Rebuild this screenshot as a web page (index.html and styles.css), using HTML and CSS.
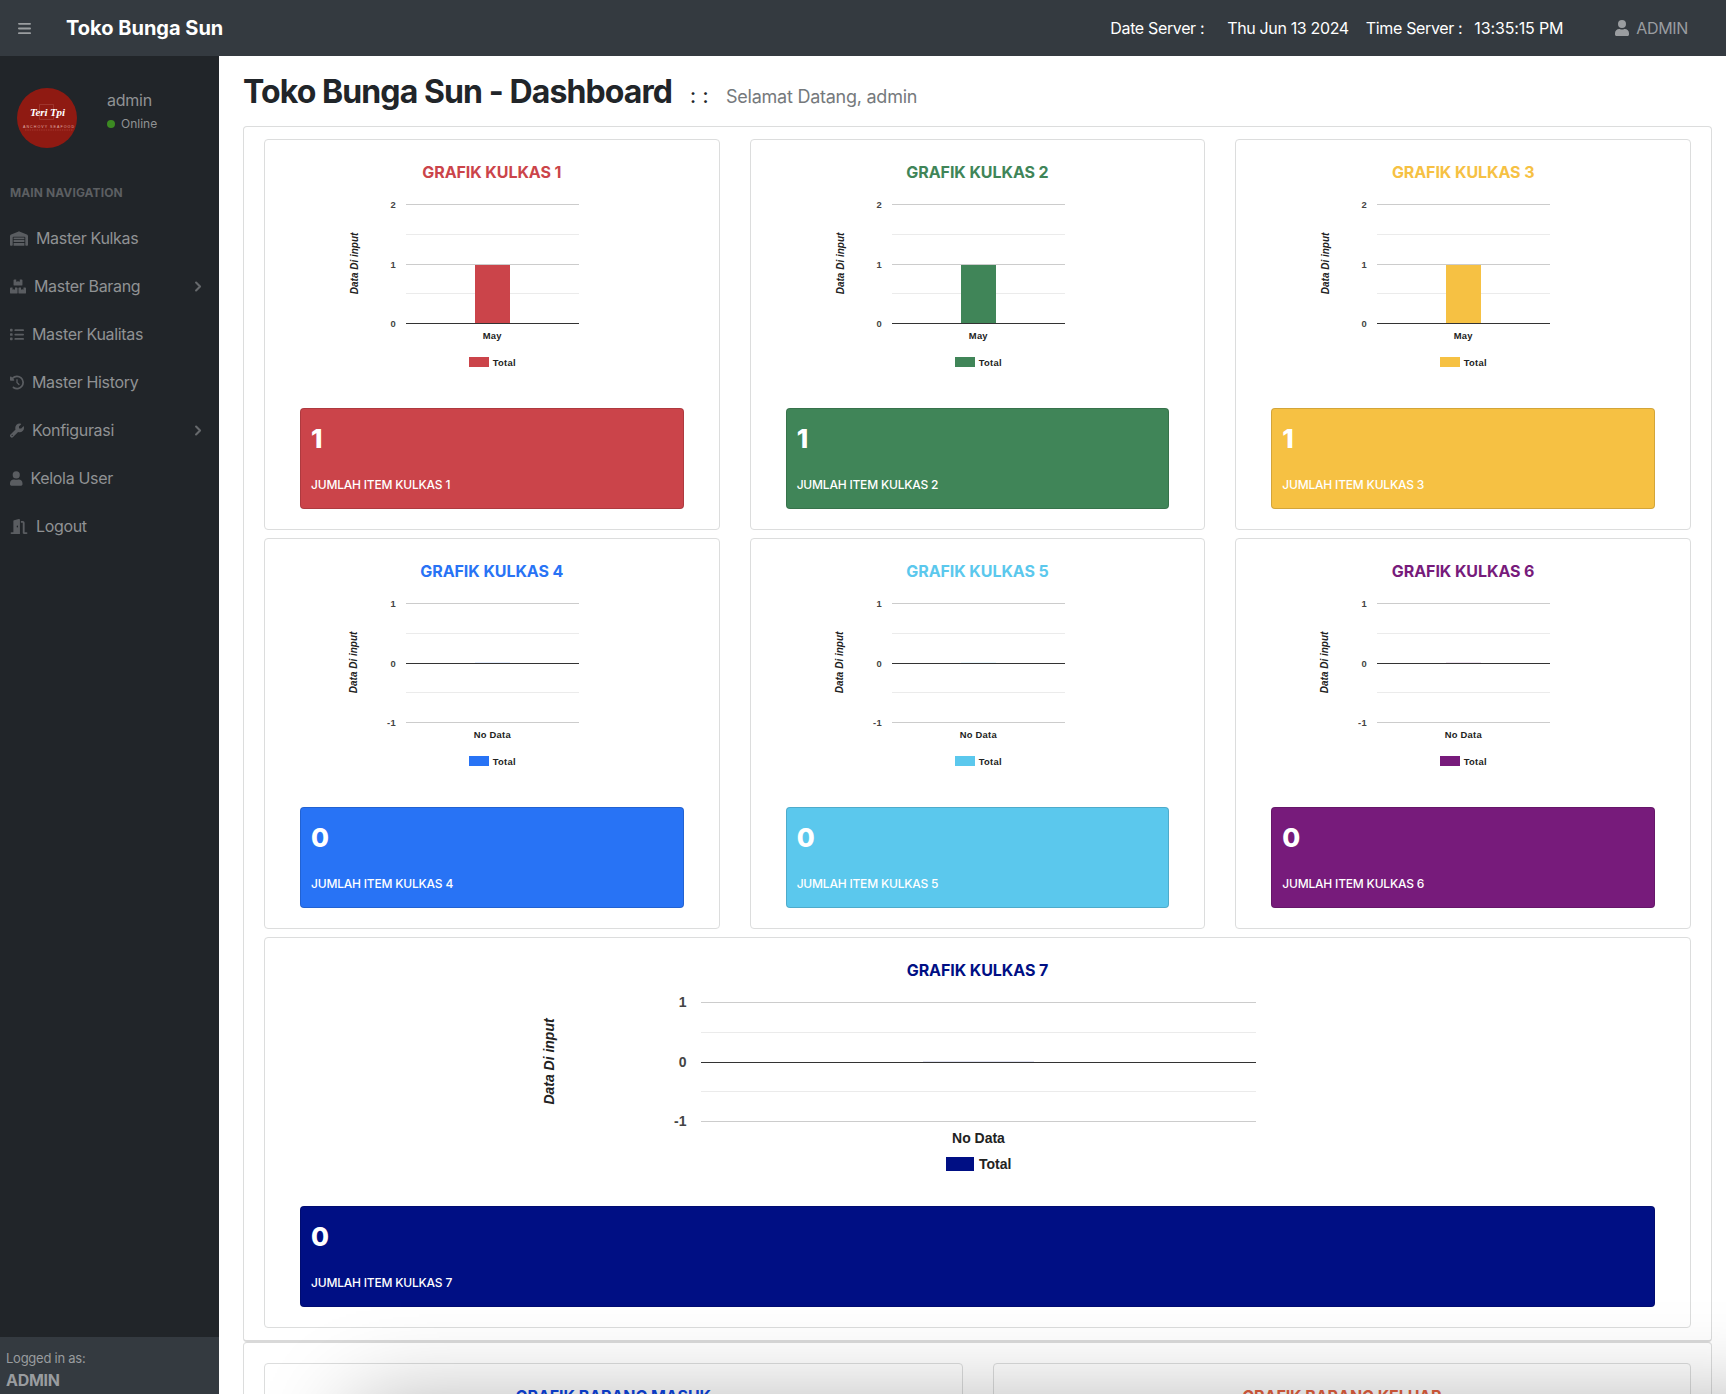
FILE: index.html
```html
<!DOCTYPE html>
<html lang="id">
<head>
<meta charset="utf-8">
<title>Toko Bunga Sun - Dashboard</title>
<link rel="stylesheet" href="styles.css">
</head>
<body>
<header class="topbar">
  <svg class="burger" viewBox="0 0 448 512"><path d="M0 96c0-17.700 14.300-32 32-32h384a32 32 0 0 1 0 64H32C14.300 128 0 113.700 0 96zm0 160c0-17.700 14.300-32 32-32h384a32 32 0 0 1 0 64H32c-17.700 0-32-14.300-32-32zm448 160c0 17.700-14.300 32-32 32H32a32 32 0 0 1 0-64h384c17.700 0 32 14.300 32 32z"/></svg>
  <span class="brand">Toko Bunga Sun</span>
  <div class="clock"><span class="c1">Date Server :</span><span class="c2">Thu Jun 13 2024</span><span class="c3">Time Server :</span><span class="c4">13:35:15 PM</span></div>
  <div class="account"><svg viewBox="0 0 448 512"><path d="M224 256a128 128 0 1 0 0-256 128 128 0 1 0 0 256zM134 288C60 288 0 348 0 422v42c0 26 22 48 48 48h352c26 0 48-22 48-48v-42c0-74-60-134-134-134H297a174 174 0 0 1-146 0z"/></svg><span>ADMIN</span></div>
</header>
<div class="shell">
  <aside class="sidebar">
    <div class="profile">
      <svg class="avatar" viewBox="0 0 60 60"><circle cx="30" cy="30" r="30" fill="#8f1a12"/><path d="M22.500 16.500h14v15h-14z" fill="none" stroke="#a8483f" stroke-width=".6"/><text class="script" x="13" y="28" textLength="35">Teri Tpi</text><text class="tag" x="6" y="39.500" textLength="51">ANCHOVY SEAFOOD</text><path d="M8 42h48" stroke="#b0453c" stroke-width=".7" stroke-dasharray="1.500 .8"/></svg>
      <div class="who"><div class="name">admin</div><div class="status"><i></i>Online</div></div>
    </div>
    <div class="nav-title">MAIN NAVIGATION</div>
    <nav>
      <a><svg style="width:18px" viewBox="0 0 640 512"><path fill-rule="evenodd" d="M0 488V171c0-26 16-50 40-60L308 4c8-3 16-3 24 0l268 107c24 10 40 34 40 60v317c0 13-11 24-24 24h-48c-13 0-24-11-24-24V224c0-18-14-32-32-32H128c-18 0-32 14-32 32v264c0 13-11 24-24 24H24c-13 0-24-11-24-24zM128 224h384v48H128zm0 80h384v80H128zm0 112h384v96H128z"/></svg><span>Master Kulkas</span></a>
      <a><svg style="width:16px" viewBox="0 0 576 512"><path d="M160 0h64v88l64-20 64 20V0h64q32 0 32 32v160q0 32-32 32H160q-32 0-32-32V32q0-32 32-32zM32 288h60v88l44-20 44 20v-88h60q32 0 32 32v160q0 32-32 32H32q-32 0-32-32V320q0-32 32-32zM336 288h60v88l44-20 44 20v-88h60q32 0 32 32v160q0 32-32 32H336q-32 0-32-32V320q0-32 32-32z"/></svg><span>Master Barang</span><svg class="chev" viewBox="0 0 320 512"><path d="M70 70l186 186L70 442"/></svg></a>
      <a><svg style="width:14px" viewBox="0 0 512 512"><path d="M24 48h48q24 0 24 24v48q0 24-24 24H24q-24 0-24-24V72q0-24 24-24zM192 64h288a32 32 0 0 1 0 64H192a32 32 0 0 1 0-64zM192 224h288a32 32 0 0 1 0 64H192a32 32 0 0 1 0-64zM192 384h288a32 32 0 0 1 0 64H192a32 32 0 0 1 0-64zM24 208h48q24 0 24 24v48q0 24-24 24H24q-24 0-24-24v-48q0-24 24-24zM24 368h48q24 0 24 24v48q0 24-24 24H24q-24 0-24-24v-48q0-24 24-24z"/></svg><span>Master Kualitas</span></a>
      <a><svg style="width:14px" viewBox="0 0 512 512"><path d="M75 75 41 41C26 26 0 37 0 58v110c0 13 11 24 24 24h110c21 0 32-26 17-41l-31-31a192 192 0 1 1 26 293c-35-25-75 26-37 53A256 256 0 1 0 75 75zM256 128c-13 0-24 11-24 24v104c0 6 3 12 7 17l72 72c24 22 56-10 34-34l-65-65v-94c0-13-11-24-24-24z"/></svg><span>Master History</span></a>
      <a><svg style="width:14px" viewBox="0 0 512 512"><path fill-rule="evenodd" d="M352 320c88 0 160-72 160-160 0-15-2-30-6-44-3-12-18-15-26-6l-69 69c-3 3-7 5-11 5h-56c-9 0-16-7-16-16v-56c0-4 2-8 5-11l69-69c9-9 6-23-6-26-14-4-29-6-44-6-88 0-160 72-160 160 0 19 3 38 10 55L19 398a65 65 0 0 0 95 95l183-183c17 7 36 10 55 10zM80 408a24 24 0 1 1 0 48 24 24 0 0 1 0-48z"/></svg><span>Konfigurasi</span><svg class="chev" viewBox="0 0 320 512"><path d="M70 70l186 186L70 442"/></svg></a>
      <a><svg style="width:12.500px" viewBox="0 0 448 512"><path d="M224 256a128 128 0 1 0 0-256 128 128 0 1 0 0 256zM134 288C60 288 0 348 0 422v42c0 26 22 48 48 48h352c26 0 48-22 48-48v-42c0-74-60-134-134-134H297a174 174 0 0 1-146 0z"/></svg><span>Kelola User</span></a>
      <a><svg style="width:18px" viewBox="0 0 576 512"><path fill-rule="evenodd" d="M320 32c0-20-18-36-40-31L120 41C106 45 96 58 96 72v376H32a32 32 0 0 0 0 64h288zM256 256c0 18-10 32-24 32s-24-14-24-32 10-32 24-32 24 14 24 32zM352 64v64h64v352c0 18 14 32 32 32h96a32 32 0 0 0 0-64h-64V128c0-35-29-64-64-64z"/></svg><span>Logout</span></a>
    </nav>
    <div class="logged"><small>Logged in as:</small><b>ADMIN</b></div>
  </aside>
  <main>
    <h1><span class="t1">Toko Bunga Sun - Dashboard</span><span class="t2">: :</span><span class="t3">Selamat Datang, admin</span></h1>
    <section class="panel grid" id="grid"></section>
    <section class="panel bottom">
      <div class="card"><h2 class="masuk">GRAFIK BARANG MASUK</h2></div>
      <div class="card"><h2 class="keluar">GRAFIK BARANG KELUAR</h2></div>
      <div class="shade"></div>
    </section>
  </main>
</div>
<script src="charts.js"></script>
</body>
</html>
```
FILE: styles.css
```css
*{box-sizing:border-box}
html{height:1394px;overflow:hidden}
body{margin:0;height:1394px;overflow:hidden;font-family:Inter,"Liberation Sans",sans-serif;font-size:16px;line-height:24px;color:#212529;background:#fff}
.topbar{height:56px;background:#343a40;display:flex;align-items:center;color:#fff;letter-spacing:-.35px}
.burger{width:13px;height:15px;margin-left:18px;fill:#9a9da0}
.brand{margin-left:35px;font-size:20px;font-weight:700;letter-spacing:0;white-space:nowrap}
.clock{margin-left:auto;display:flex;white-space:nowrap}
.c2{margin-left:23px}.c3{margin-left:17px}.c4{margin-left:12px;letter-spacing:-.15px}
.account{margin:0 38px 0 52px;display:flex;align-items:center;gap:7px;color:#9a9da0}
.account svg{width:14px;height:16px;fill:#9a9da0}
.shell{display:flex;height:1338px;overflow:hidden}
.sidebar{width:219px;flex:none;background:#212529;display:flex;flex-direction:column;color:#909294}
.profile{display:flex;padding:32px 0 0 17px;height:120px}
.avatar{width:60px;height:60px}
.script{font:italic 700 11px "Liberation Serif",serif;fill:#fff}
.tag{font:3.600px "Liberation Sans",sans-serif;fill:#e0b0aa}
.who{margin-left:30px;letter-spacing:-.25px}
.status{font-size:12px;line-height:24px;display:flex;align-items:center;gap:6px;letter-spacing:0}
.status i{width:8px;height:8px;border-radius:50%;background:#3c8a22}
.nav-title{font-size:12px;font-weight:700;line-height:18px;padding:8px 0 0 10px;height:38px;color:#5c5f62;letter-spacing:.1px}
nav{display:flex;flex-direction:column}
nav a{height:48px;display:flex;align-items:center;padding:0 17px 0 10px;letter-spacing:-.33px}
nav a svg{height:15px;fill:#5a5d61;flex:none}
nav a span{margin-left:8px;white-space:nowrap}
nav .chev{width:8px;height:11px;margin-left:auto;fill:none;stroke:#66696c;stroke-width:95;stroke-linecap:round;stroke-linejoin:round}
.logged{margin-top:auto;height:57px;background:#343a40;padding:9px 6px;color:#999c9f;line-height:24px}
.logged small{display:block;font-size:13px;letter-spacing:-.25px}
.logged b{display:block;font-size:16px;font-weight:700;line-height:20px;letter-spacing:-.3px}
main{flex:1;min-width:0;padding:0 14px 0 24px}
h1{margin:0;height:70px;padding-top:16px;display:flex;align-items:baseline;line-height:40px;white-space:nowrap}
.t1{font-size:32px;font-weight:700;letter-spacing:-.9px}
.t2{font-size:20px;font-weight:500;margin-left:18px;letter-spacing:.5px}
.t3{font-size:18px;font-weight:400;color:#75797c;margin-left:17px;letter-spacing:-.25px}
.panel{border:1px solid #dcdddd;border-radius:4px;padding:12px 20px}
.grid{display:grid;grid-template-columns:repeat(3,1fr);grid-auto-rows:391px;column-gap:30px;row-gap:8px;height:1216px;border-bottom:2px solid #d9d9d9}
.card{border:1px solid #dcdddd;border-radius:4px;height:391px;padding:20px 35px 0}
.wide{grid-column:1/4}
h2{margin:0;font-size:16px;font-weight:700;line-height:24px;text-align:center;white-space:nowrap;letter-spacing:-.08px}
.chart{display:block;width:100%;height:224px}
.chart text{font-family:"Liberation Sans",Arial,sans-serif;font-weight:700;fill:#222}
.chart .tick{fill:#444;text-anchor:end}
.chart .mid{text-anchor:middle}
.chart .ital{font-style:italic;text-anchor:middle}
.small-chart text{font-size:9.400px;letter-spacing:.25px}
.small-chart .ital{font-size:10px;letter-spacing:0}
.big-chart text{font-size:14px}
.tile{height:101px;border:1px solid rgba(0,0,0,.14);border-radius:4px;color:#fff;padding:10px}
.tile b{display:block;font-size:26px;line-height:40px;font-weight:800;letter-spacing:-.3px}
.tile span{display:block;margin-top:14px;font-size:12px;font-weight:500;line-height:24px;letter-spacing:-.2px}
.bottom{position:relative;border-top-color:#d9d9d9;padding:20px;display:grid;grid-template-columns:1fr 1fr;column-gap:30px;height:500px}
.masuk{color:#0d45e0}
.keluar{color:#e4613f}
.shade{position:absolute;left:112px;right:-90px;top:62px;height:400px;box-shadow:0 0 90px rgba(0,0,0,.33)}
```
FILE: charts.js
```js
const fridges = [
  {n: 1, color: '#cb444a', total: 1},
  {n: 2, color: '#408558', total: 1},
  {n: 3, color: '#f6c143', total: 1},
  {n: 4, color: '#2873f5', total: 0},
  {n: 5, color: '#5bc8ed', total: 0},
  {n: 6, color: '#771b7b', total: 0},
  {n: 7, color: '#000f84', total: 0, wide: true}
];

// Horizontal measures, relative to the middle of the plot
const sizes = {
  small: {half: 86.500, bar: 17.500, tick: 96.500, title: 134.500, sw: 20, sh: 10, lx: -23.500, ly: 173, tx: .5, cat: 155, lt: 182, dy: 4},
  big: {half: 277.500, bar: 55.500, tick: 292, title: 424.500, sw: 28, sh: 14, lx: -32.500, ly: 175, tx: .5, cat: 161, lt: 187, dy: 5}
};

function chart(f) {
  const s = f.wide ? sizes.big : sizes.small;
  const w = f.wide ? 1355 : 384;
  const c = f.wide ? 678.500 : 192.500;
  const labels = f.total ? [2, 1, 0] : [1, 0, -1];
  const rows = [20, 50, 80, 109, 139];
  const base = f.total ? 4 : 2;
  let out = '';
  rows.forEach((y, i) => {
    const color = i === base ? '#333' : i % 2 ? '#ebebeb' : '#ccc';
    out += `<rect x="${c - s.half}" y="${y}" width="${s.half * 2}" height="1" fill="${color}"/>`;
    if (i % 2 === 0) out += `<text class="tick" x="${c - s.tick}" y="${y + s.dy}">${labels[i / 2]}</text>`;
  });
  if (f.total) out += `<rect x="${c - s.bar}" y="81" width="${s.bar * 2}" height="58" fill="${f.color}"/>`;
  else out += `<rect x="${c - s.bar}" y="79" width="${s.bar * 2}" height="1" fill="${f.color}" opacity=".12"/>`;
  out += `<text class="ital" transform="translate(${c - s.title - (f.total || f.wide ? 0 : 1)} 79.500) rotate(-90)">Data Di input</text>`;
  out += `<text class="mid" x="${c}" y="${s.cat}">${f.total ? 'May' : 'No Data'}</text>`;
  out += `<rect x="${c + s.lx}" y="${s.ly}" width="${s.sw}" height="${s.sh}" fill="${f.color}"/>`;
  out += `<text x="${c + s.tx}" y="${s.lt}">Total</text>`;
  return `<svg class="chart ${f.wide ? 'big-chart' : 'small-chart'}" shape-rendering="crispEdges" viewBox="0 0 ${w} 224" preserveAspectRatio="xMidYMin meet">${out}</svg>`;
}

document.getElementById('grid').innerHTML = fridges.map(f => `
<article class="card ${f.wide ? 'wide' : ''}">
  <h2 style="color:${f.color}">GRAFIK KULKAS ${f.n}</h2>
  ${chart(f)}
  <div class="tile" style="background-color:${f.color}"><b>${f.total}</b><span>JUMLAH ITEM KULKAS ${f.n}</span></div>
</article>`).join('');
```
